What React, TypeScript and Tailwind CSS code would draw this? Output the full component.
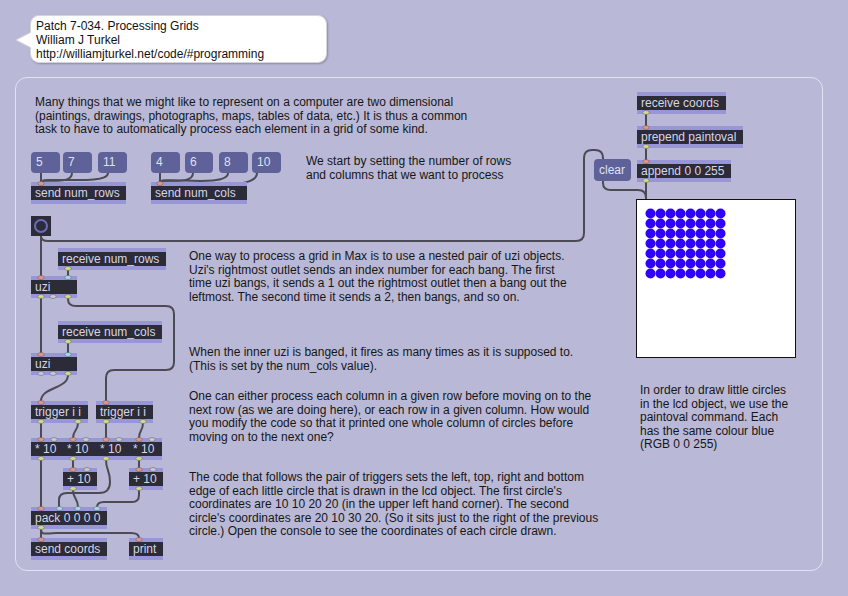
import React from "react";

const OBJ =
  "h-[22px] border-y-[4px] border-[#9896d6] bg-[#2c2b38] pl-[4px] text-[12px] leading-[14px] text-[#d6d6e6] whitespace-nowrap";
const AOBJ = `absolute ${OBJ}`;
const NUM =
  "absolute h-[21px] rounded-[4px] bg-[#5e6299] pl-[5px] text-[12px] leading-[21px] text-[#dfe0f4] whitespace-nowrap";
const CMT = "text-[12px] leading-[13.5px] text-[#161616] whitespace-nowrap";

type Port = [number, number, string];

const HOT = "#e3948c";
const COLD = "#a4dbe9";
const OUT = "#d3db8a";
const OFF = "#c9c9cf";

const ports: Port[] = [
  [41, 183.5, HOT],
  [160, 183.5, HOT],
  [68, 268.5, OUT],
  [41, 277.5, HOT],
  [68, 277.5, COLD],
  [41, 296.5, OUT],
  [53, 296.5, OFF],
  [68, 296.5, OUT],
  [68, 341.5, OUT],
  [41, 354.5, HOT],
  [68, 354.5, COLD],
  [41, 373.5, OFF],
  [53, 373.5, OFF],
  [68, 373.5, OUT],
  [41, 402.5, HOT],
  [41, 421.5, OUT],
  [78, 421.5, OUT],
  [106, 402.5, HOT],
  [106, 421.5, OUT],
  [143, 421.5, OUT],
  [41, 439.5, HOT],
  [54, 439.5, OFF],
  [73, 439.5, HOT],
  [86, 439.5, OFF],
  [106, 439.5, HOT],
  [119, 439.5, OFF],
  [139, 439.5, HOT],
  [152, 439.5, OFF],
  [41, 458.5, OUT],
  [73, 458.5, OUT],
  [106, 458.5, OUT],
  [139, 458.5, OUT],
  [73, 469.5, HOT],
  [87, 469.5, OFF],
  [73, 488.5, OUT],
  [139, 469.5, HOT],
  [153, 469.5, OFF],
  [139, 488.5, OUT],
  [41, 508.5, HOT],
  [59.5, 508.5, COLD],
  [78, 508.5, COLD],
  [97, 508.5, COLD],
  [41, 527.5, OUT],
  [41, 539.5, HOT],
  [139, 539.5, HOT],
  [646, 112.5, OUT],
  [646, 127.5, HOT],
  [646, 146.5, OUT],
  [646, 161.5, HOT],
  [646, 180.5, OUT],
];

const cords: string[] = [
  "M41,173 L41,182",
  "M72,173 C72,186 41,178 41,182",
  "M108,173 C108,186 41,176 41,182",
  "M160,173 L160,182",
  "M193,173 C193,186 160,178 160,182",
  "M228,173 C228,188 160,176 160,182",
  "M257,173 C257,190 200,184 160,182",
  "M41,236 L41,276",
  "M41,236 Q41,241 48,241 L576,241 Q584,241 584,233 L584,158 Q584,150 592,150 L595,150 Q603,150 603,158 L603,159",
  "M68,270 L68,276",
  "M41,298 L41,353",
  "M68,298 L68,299 Q68,306 76,306 L166,306 Q174,306 174,314 L174,362 Q174,370 166,370 L114,370 Q106,370 106,378 L106,401",
  "M68,343 L68,353",
  "M68,375 C68,389 41,387 41,401",
  "M41,423 L41,438",
  "M78,423 C78,431 73,430 73,438",
  "M106,423 L106,438",
  "M143,423 C143,431 139,430 139,438",
  "M41,460 L41,507",
  "M73,460 L73,468",
  "M106,460 C106,470 110,470 110,482 C110,490 106,493 99,493 L67,493 Q59,493 59,500 L59,507",
  "M73,490 C73,499 78,498 78,507",
  "M139,460 L139,468",
  "M139,490 L139,495 Q139,502 132,502 L104,502 Q97,502 97,507",
  "M41,529 L41,538",
  "M41,529 C41,536 46,533 56,533 L131,533 Q139,533 139,538",
  "M646,114 L646,126",
  "M646,148 L646,160",
  "M646,182 L646,199",
  "M603,181 L603,183 Q603,190 611,190 L638,190 Q646,190 646,198",
];

const circles: [number, number][] = [];
for (let r = 0; r < 7; r++) {
  for (let c = 0; c < 8; c++) {
    circles.push([c, r]);
  }
}

export default function App() {
  return (
    <div className="relative w-[848px] h-[596px] overflow-hidden bg-[#b9b9d7] pt-[15px] font-['Liberation_Sans',Arial,sans-serif]">
      {/* header comment bubble */}
      <div className="relative ml-[30px] w-[297px] h-[48px] rounded-[9px] border border-[#d4d4dc] bg-white pl-[5px] pt-[3px] text-[12px] leading-[14px] text-[#111] shadow-[1px_1px_2px_rgba(0,0,0,0.25)]">
        <svg className="absolute left-[-16px] top-[15px]" width="17" height="18" viewBox="0 0 17 18">
          <path d="M16.5,1 L1,9 L16.5,17" fill="white" stroke="#d4d4dc" strokeWidth="1" />
          <rect x="15.5" y="1.5" width="2" height="15" fill="white" />
        </svg>
        <div>Patch 7-034. Processing Grids</div>
        <div>William J Turkel</div>
        <div>http://williamjturkel.net/code/#programming</div>
      </div>

      {/* patcher panel */}
      <div className="ml-[15px] mt-[14px] w-[808px] h-[494px] rounded-[12px] border border-[#e2e2f0]" />

      {/* patch cords */}
      <svg className="absolute left-0 top-0 pointer-events-none" width="848" height="596">
        {cords.map((d, i) => (
          <path key={i} d={d} fill="none" stroke="#4b4b55" strokeWidth="2" strokeLinecap="round" />
        ))}
      </svg>

      {/* comments */}
      <div className={`absolute ${CMT} left-[35px] top-[96px]`}>
        Many things that we might like to represent on a computer are two dimensional
        <br />
        (paintings, drawings, photographs, maps, tables of data, etc.) It is thus a common
        <br />
        task to have to automatically process each element in a grid of some kind.
      </div>
      <div className={`absolute ${CMT} left-[306px] top-[155px]`}>
        We start by setting the number of rows
        <br />
        and columns that we want to process
      </div>
      <div className="absolute left-[189px] top-[250px] flex flex-col">
        <div className={CMT}>
          One way to process a grid in Max is to use a nested pair of uzi objects.
          <br />
          Uzi's rightmost outlet sends an index number for each bang. The first
          <br />
          time uzi bangs, it sends a 1 out the rightmost outlet then a bang out the
          <br />
          leftmost. The second time it sends a 2, then bangs, and so on.
        </div>
        <div className={`${CMT} mt-[42px]`}>
          When the inner uzi is banged, it fires as many times as it is supposed to.
          <br />
          (This is set by the num_cols value).
        </div>
        <div className={`${CMT} mt-[17px]`}>
          One can either process each column in a given row before moving on to the
          <br />
          next row (as we are doing here), or each row in a given column. How would
          <br />
          you modify the code so that it printed one whole column of circles before
          <br />
          moving on to the next one?
        </div>
        <div className={`${CMT} mt-[27px]`}>
          The code that follows the pair of triggers sets the left, top, right and bottom
          <br />
          edge of each little circle that is drawn in the lcd object. The first circle's
          <br />
          coordinates are 10 10 20 20 (in the upper left hand corner). The second
          <br />
          circle's coordinates are 20 10 30 20. (So it sits just to the right of the previous
          <br />
          circle.) Open the console to see the coordinates of each circle drawn.
        </div>
      </div>

      {/* number boxes */}
      <div className={`${NUM} left-[31px] top-[152px] w-[29px]`}>5</div>
      <div className={`${NUM} left-[63px] top-[152px] w-[29px]`}>7</div>
      <div className={`${NUM} left-[98px] top-[152px] w-[29px]`}>11</div>
      <div className={`${NUM} left-[151px] top-[152px] w-[29px]`}>4</div>
      <div className={`${NUM} left-[185px] top-[152px] w-[28px]`}>6</div>
      <div className={`${NUM} left-[219px] top-[152px] w-[29px]`}>8</div>
      <div className={`${NUM} left-[252px] top-[152px] w-[29px]`}>10</div>
      <div className={`${NUM} left-[594px] top-[159px] w-[37px] h-[22px] leading-[22px] pl-[4px]`}>clear</div>

      {/* objects */}
      <div className={`${AOBJ} left-[31px] top-[182px] w-[95px]`}>send num_rows</div>
      <div className={`${AOBJ} left-[151px] top-[182px] w-[96px]`}>send num_cols</div>

      <div className="absolute left-[31px] top-[216px] w-[20px] h-[20px] bg-[#2c2b38] flex items-center justify-center">
        <div className="w-[14px] h-[14px] rounded-full border-2 border-[#6b6bbd]" />
      </div>

      <div className={`${AOBJ} left-[58px] top-[248px] w-[108px]`}>receive num_rows</div>
      <div className={`${AOBJ} left-[31px] top-[276px] w-[46px]`}>uzi</div>
      <div className={`${AOBJ} left-[58px] top-[321px] w-[104px]`}>receive num_cols</div>
      <div className={`${AOBJ} left-[31px] top-[353px] w-[46px]`}>uzi</div>

      <div className="absolute left-[31px] top-[401px] flex gap-[8px]">
        <div className={`${OBJ} w-[57px]`}>trigger i i</div>
        <div className={`${OBJ} w-[57px]`}>trigger i i</div>
      </div>

      <div className="absolute left-[31px] top-[438px] flex">
        <div className={`${OBJ} w-[32px]`}>* 10</div>
        <div className={`${OBJ} w-[33px]`}>* 10</div>
        <div className={`${OBJ} w-[33px]`}>* 10</div>
        <div className={`${OBJ} w-[33px]`}>* 10</div>
      </div>

      <div className="absolute left-[63px] top-[468px] flex gap-[32px]">
        <div className={`${OBJ} w-[34px]`}>+ 10</div>
        <div className={`${OBJ} w-[34px]`}>+ 10</div>
      </div>

      <div className={`${AOBJ} left-[31px] top-[507px] w-[76px]`}>pack 0 0 0 0</div>
      <div className="absolute left-[31px] top-[538px] flex gap-[22px]">
        <div className={`${OBJ} w-[76px]`}>send coords</div>
        <div className={`${OBJ} w-[34px]`}>print</div>
      </div>

      {/* right column: receive → prepend → append → lcd, and its comment */}
      <div className="absolute left-[636px] top-[92px] flex flex-col items-start">
        <div className={`${OBJ} ml-[1px] w-[89px]`}>receive coords</div>
        <div className={`${OBJ} ml-[1px] mt-[12px] w-[106px]`}>prepend paintoval</div>
        <div className={`${OBJ} ml-[1px] mt-[12px] w-[94px]`}>append 0 0 255</div>
        <div className="mt-[17px] w-[160px] h-[159px] bg-white border-[1.5px] border-[#111]">
          <svg width="157" height="156" className="block">
            {circles.map(([c, r], i) => (
              <circle key={i} cx={13.5 + c * 10} cy={13.5 + r * 10} r={5} fill="#3000ff" />
            ))}
          </svg>
        </div>
        <div className={`${CMT} ml-[4px] mt-[26px]`}>
          In order to draw little circles
          <br />
          in the lcd object, we use the
          <br />
          paintoval command. Each
          <br />
          has the same colour blue
          <br />
          (RGB 0 0 255)
        </div>
      </div>

      {/* inlets / outlets */}
      <svg className="absolute left-0 top-0 pointer-events-none" width="848" height="596">
        {ports.map(([x, y, c], i) => (
          <ellipse key={i} cx={x} cy={y} rx={3.2} ry={2} fill={c} stroke="#5a5a66" strokeWidth="0.5" />
        ))}
      </svg>
    </div>
  );
}
